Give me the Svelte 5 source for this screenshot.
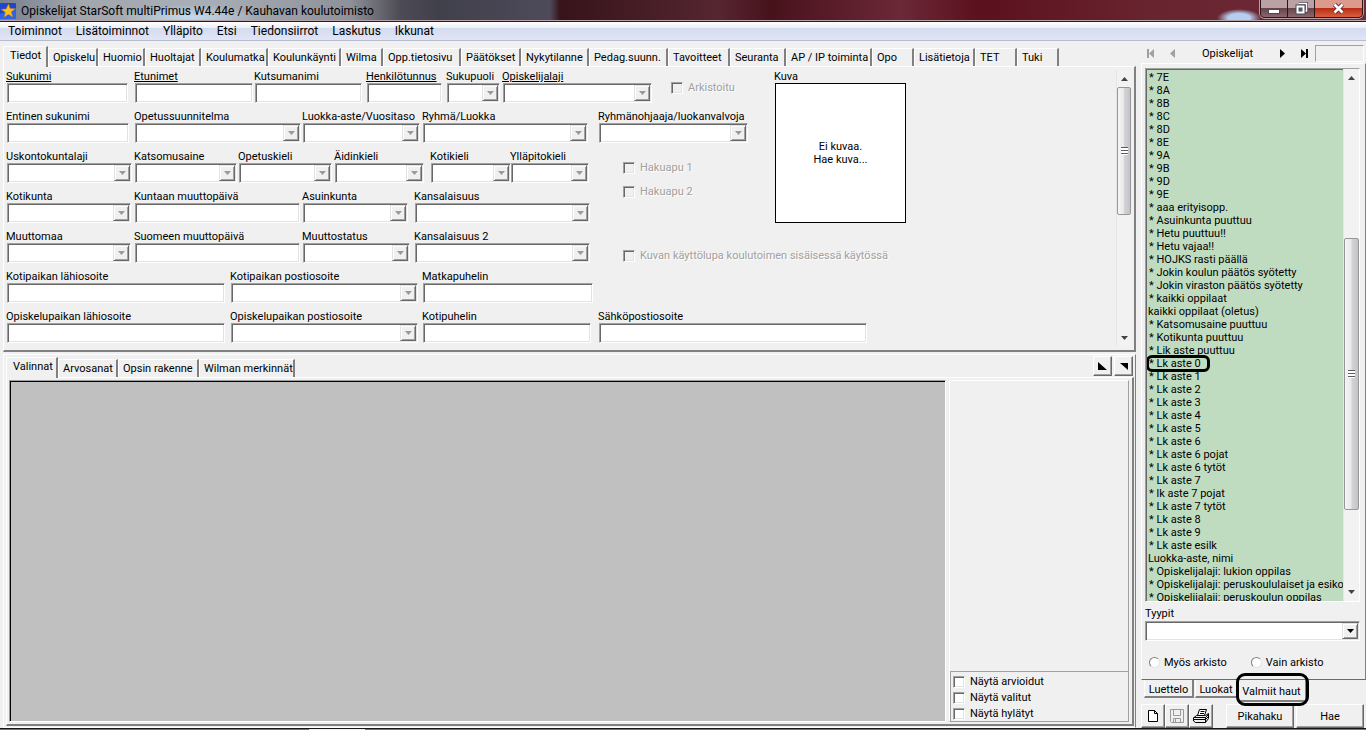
<script>
    const menus = ["Toiminnot", "Lisätoiminnot", "Ylläpito", "Etsi", "Tiedonsiirrot", "Laskutus", "Ikkunat"];

    // name + width of the tab
    const tabs = [
        ["Tiedot", 45], ["Opiskelu", 50], ["Huomio", 47], ["Huoltajat", 56], ["Koulumatka", 67],
        ["Koulunkäynti", 73], ["Wilma", 42], ["Opp.tietosivu", 78], ["Päätökset", 60], ["Nykytilanne", 68],
        ["Pedag.suunn.", 79], ["Tavoitteet", 62], ["Seuranta", 56], ["AP / IP toiminta", 86], ["Opo", 42],
        ["Lisätietoja", 61], ["TET", 42], ["Tuki", 42]
    ];
    const lowerTabs = [["Valinnat", 52], ["Arvosanat", 60], ["Opsin rakenne", 81], ["Wilman merkinnät", 96]];

    // label, kind, slot width, control width, underlined
    const row1 = [
        ["Sukunimi", "text", 128, 121, true],
        ["Etunimet", "text", 120, 118, true],
        ["Kutsumanimi", "text", 112, 107],
        ["Henkilötunnus", "text", 80, 75, true],
        ["Sukupuoli", "select", 56, 53],
        ["Opiskelijalaji", "select", 168, 149, true]
    ];
    const row2 = [
        ["Entinen sukunimi", "text", 128, 122],
        ["Opetussuunnitelma", "select", 168, 166],
        ["Luokka-aste/Vuositaso", "select", 120, 117],
        ["Ryhmä/Luokka", "select", 176, 165],
        ["Ryhmänohjaaja/luokanvalvoja", "select", 149, 149]
    ];
    const row3 = [
        ["Uskontokuntalaji", "select", 128, 125],
        ["Katsomusaine", "select", 104, 102],
        ["Opetuskieli", "select", 96, 93],
        ["Äidinkieli", "select", 96, 89],
        ["Kotikieli", "select", 80, 80],
        ["Ylläpitokieli", "select", 105, 78]
    ];
    const row4 = [
        ["Kotikunta", "select", 128, 124],
        ["Kuntaan muuttopäivä", "text", 168, 165],
        ["Asuinkunta", "select", 112, 105],
        ["Kansalaisuus", "select", 200, 175]
    ];
    const row5 = [
        ["Muuttomaa", "select", 128, 124],
        ["Suomeen muuttopäivä", "text", 168, 165],
        ["Muuttostatus", "select", 112, 107],
        ["Kansalaisuus 2", "select", 208, 175]
    ];
    const row6 = [
        ["Kotipaikan lähiosoite", "text", 224, 218],
        ["Kotipaikan postiosoite", "select", 192, 187],
        ["Matkapuhelin", "text", 176, 170]
    ];
    const row7 = [
        ["Opiskelupaikan lähiosoite", "text", 224, 218],
        ["Opiskelupaikan postiosoite", "select", 192, 187],
        ["Kotipuhelin", "text", 176, 168],
        ["Sähköpostiosoite", "text", 268, 268]
    ];

    const searches = [
        "* 7E", "* 8A", "* 8B", "* 8C", "* 8D", "* 8E", "* 9A", "* 9B", "* 9D", "* 9E",
        "* aaa erityisopp.", "* Asuinkunta puuttuu", "* Hetu puuttuu!!", "* Hetu vajaa!!",
        "* HOJKS rasti päällä", "* Jokin koulun päätös syötetty", "* Jokin viraston päätös syötetty",
        "* kaikki oppilaat", "kaikki oppilaat (oletus)", "* Katsomusaine puuttuu",
        "* Kotikunta puuttuu", "* Lik aste puuttuu", "* Lk aste 0", "* Lk aste 1", "* Lk aste 2",
        "* Lk aste 3", "* Lk aste 4", "* Lk aste 5", "* Lk aste 6", "* Lk aste 6 pojat",
        "* Lk aste 6 tytöt", "* Lk aste 7", "* lk aste 7 pojat", "* Lk aste 7 tytöt",
        "* Lk aste 8", "* Lk aste 9", "* Lk aste esilk", "Luokka-aste, nimi",
        "* Opiskelijalaji: lukion oppilas", "* Opiskelijalaji: peruskoululaiset ja esikou",
        "* Opiskelijalaji: peruskoulun oppilas"
    ];
    const marked = "* Lk aste 0";

    let activeTab = $state("Tiedot");
    let activeLower = $state("Valinnat");
    let archive = $state("");
</script>

{#snippet fields(row)}
    {#each row as [name, kind, slot, width, underlined]}
        <label class="field" style:width="{slot}px">
            <span class="caption" class:underlined>{name}</span>
            {#if kind === "select"}
                <span class="combo" style:width="{width}px">
                    <select disabled><option></option></select>
                    <span class="drop">
                        <svg width="7" height="4" viewBox="0 0 7 4"><path d="M0 0h7L3.500 4z" fill="#9a9a9a" /></svg>
                    </span>
                </span>
            {:else}
                <input type="text" class="sunken" style:width="{width}px" />
            {/if}
        </label>
    {/each}
{/snippet}

{#snippet check(name, disabled)}
    <label class="check" class:disabled>
        <input type="checkbox" {disabled} />
        <span>{name}</span>
    </label>
{/snippet}

{#snippet scrollbar(kind)}
    <div class="scrollbar {kind}">
        <svg class="cap" width="7" height="4" viewBox="0 0 7 4"><path d="M0 4h7L3.500 0z" fill="#444" /></svg>
        <div class="track">
            <div class="thumb"><i></i></div>
        </div>
        <svg class="cap" width="7" height="4" viewBox="0 0 7 4"><path d="M0 0h7L3.500 4z" fill="#444" /></svg>
    </div>
{/snippet}

<div class="window">
    <header class="titlebar">
        <svg class="logo" width="16" height="16" viewBox="0 0 16 16">
            <rect width="16" height="16" rx="1" fill="#1d46cf" />
            <path d="M0 11l16-6v11H0z" fill="#2c63ea" />
            <path d="M8.500 1l1.600 4.600 5 .2-3.900 3.200 1.700 5-4.500-2.700-4.300 3 1.300-5L1 6.400l5.200-.5z" fill="#fdbf1c" stroke="#c77c0a" stroke-width=".5" />
        </svg>
        <h1>Opiskelijat StarSoft multiPrimus W4.44e / Kauhavan koulutoimisto</h1>
        <div class="controls">
            <button class="min" aria-label="Pienennä">
                <svg width="12" height="12" viewBox="0 0 12 12"><rect x=".5" y="6.500" width="11" height="4" fill="#fff" stroke="#4a4a58" /></svg>
            </button>
            <button class="max" aria-label="Palauta">
                <svg width="13" height="13" viewBox="0 0 13 13">
                    <path d="M4 1.500h7.500V9H9" fill="none" stroke="#4a4a58" stroke-width="3" />
                    <path d="M4 1.500h7.500V9H9" fill="none" stroke="#fff" stroke-width="1.500" />
                    <rect x="2.500" y="4.500" width="6" height="6" fill="none" stroke="#4a4a58" stroke-width="4" />
                    <rect x="2.500" y="4.500" width="6" height="6" fill="#555566" stroke="#fff" stroke-width="2" />
                </svg>
            </button>
            <button class="close" aria-label="Sulje">
                <svg width="13" height="11" viewBox="0 0 13 11">
                    <path d="M2.500 1.500l8 8M10.500 1.500l-8 8" stroke="#5a3038" stroke-width="4.500" />
                    <path d="M2.500 1.500l8 8M10.500 1.500l-8 8" stroke="#fff" stroke-width="2.600" />
                </svg>
            </button>
        </div>
    </header>

    <nav class="menubar">
        {#each menus as menu}
            <button>{menu}</button>
        {/each}
    </nav>

    <div class="body">
        <main>
            <section class="student">
                <div class="tabs">
                    {#each tabs as [name, width]}
                        <button class="tab" class:active={activeTab === name} style:width="{width}px" onclick={() => (activeTab = name)}>{name}</button>
                    {/each}
                </div>
                <div class="sheet">
                    <form>
                        <div class="upper">
                            <div>
                                <div class="row">
                                    {@render fields(row1)}
                                    {@render check("Arkistoitu", true)}
                                </div>
                                <div class="row">{@render fields(row2)}</div>
                                <div class="pair">
                                    <div>
                                        <div class="row">{@render fields(row3)}</div>
                                        <div class="row">{@render fields(row4)}</div>
                                    </div>
                                    <div class="stack">
                                        {@render check("Hakuapu 1", true)}
                                        {@render check("Hakuapu 2", true)}
                                    </div>
                                </div>
                            </div>
                            <div class="photo">
                                <span class="caption">Kuva</span>
                                <button type="button">Ei kuvaa.<br />Hae kuva...</button>
                            </div>
                        </div>
                        <div class="row permit">
                            {@render fields(row5)}
                            {@render check("Kuvan käyttölupa koulutoimen sisäisessä käytössä", true)}
                        </div>
                        <div class="row">{@render fields(row6)}</div>
                        <div class="row">{@render fields(row7)}</div>
                    </form>
                    {@render scrollbar("form-scroll")}
                </div>
            </section>

            <section class="choices">
                <div class="tabs">
                    {#each lowerTabs as [name, width]}
                        <button class="tab" class:active={activeLower === name} style:width="{width}px" onclick={() => (activeLower = name)}>{name}</button>
                    {/each}
                    <div class="corner">
                        <button class="raised" aria-label="Suurenna">
                            <svg width="9" height="8" viewBox="0 0 9 8"><path d="M0 0v8h9z" /></svg>
                        </button>
                        <button class="raised" aria-label="Pienennä">
                            <svg width="8" height="7" viewBox="0 0 8 7"><path d="M0 0h8v7z" /></svg>
                        </button>
                    </div>
                </div>
                <div class="sheet">
                    <div class="canvas"></div>
                    <div class="side">
                        <div class="filters">
                            {@render check("Näytä arvioidut", false)}
                            {@render check("Näytä valitut", false)}
                            {@render check("Näytä hylätyt", false)}
                        </div>
                    </div>
                </div>
            </section>
        </main>

        <aside>
            <div class="browse">
                <button class="dim" aria-label="Ensimmäinen">
                    <svg width="8" height="9" viewBox="0 0 8 9"><path d="M0 0h2v9H0zM7 0v9L2 4.500z" /></svg>
                </button>
                <button class="dim" aria-label="Edellinen">
                    <svg width="8" height="9" viewBox="0 0 8 9"><path d="M6 0v9L1 4.500z" /></svg>
                </button>
                <span>Opiskelijat</span>
                <button aria-label="Seuraava">
                    <svg width="8" height="9" viewBox="0 0 8 9"><path d="M2 0v9l5-4.500z" /></svg>
                </button>
                <button aria-label="Viimeinen">
                    <svg width="8" height="9" viewBox="0 0 8 9"><path d="M1 0v9l5-4.500zM6 0h2v9H6z" /></svg>
                </button>
                <output></output>
            </div>

            <div class="finder">
                <div class="listbox">
                    <ul>
                        {#each searches as item}
                            <li class:star={item[0] === "*"}>
                                {item}
                                {#if item === marked}<span class="ring"></span>{/if}
                            </li>
                        {/each}
                    </ul>
                    {@render scrollbar("list-scroll")}
                </div>
                <label class="types">
                    <span class="caption">Tyypit</span>
                    <span class="combo">
                        <select><option></option></select>
                        <span class="drop">
                            <svg width="7" height="4" viewBox="0 0 7 4"><path d="M0 0h7L3.500 4z" /></svg>
                        </span>
                    </span>
                </label>
                <div class="radios">
                    <label><input type="radio" name="archive" value="also" bind:group={archive} /> Myös arkisto</label>
                    <label><input type="radio" name="archive" value="only" bind:group={archive} /> Vain arkisto</label>
                </div>
            </div>

            <div class="bottom-tabs">
                <button>Luettelo</button>
                <button>Luokat</button>
                <button class="active">Valmiit haut<span class="ring"></span></button>
            </div>

            <div class="actions">
                <button class="raised icon" aria-label="Uusi">
                    <svg width="12" height="14" viewBox="0 0 12 14"><path d="M1.500 1.500h6l3 3v8h-9zM7.500 1.500v3h3" fill="#fff" stroke="#000" /></svg>
                </button>
                <button class="raised icon" aria-label="Tallenna">
                    <svg width="14" height="14" viewBox="0 0 14 14">
                        <path d="M.5.5h13v13h-12l-1-1zM3.500.5v6h7v-6M3.500 13.500v-4h7v4M5.500 10v3" fill="none" stroke="#9a9a9a" />
                    </svg>
                </button>
                <button class="raised icon" aria-label="Tulosta">
                    <svg width="17" height="15" viewBox="0 0 17 15">
                        <path d="M3.500 6.500h9l3-2v5l-3 4h-10l-2-1.500v-3z" fill="#f0f0f0" stroke="#000" />
                        <path d="M6.500.5h7l-2 6h-7z" fill="#fff" stroke="#000" />
                        <path d="M7.500 2.500h4M7 4.500h4M.5 8.500h12l3-3M.5 10.500h12l3-3M12.500 8.500v5" fill="none" stroke="#000" />
                    </svg>
                </button>
                <button class="raised wide first">Pikahaku</button>
                <button class="raised wide">Hae</button>
            </div>
        </aside>
    </div>
    <footer><span></span></footer>
</div>

<style>
    :global(body) {
        background: #f0f0f0;
    }

    .window {
        height: 100vh;
        display: flex;
        flex-direction: column;
        overflow: hidden;
        background: #f0f0f0;
        color: #000;
        font: 11px/13px Roboto, Tahoma, sans-serif;
        white-space: nowrap;
    }
    .window *, .window *::after {
        box-sizing: border-box;
    }
    button, input, select {
        font: inherit;
        color: inherit;
        margin: 0;
        padding: 0;
        border: 0;
        border-radius: 0;
        background: none;
    }
    svg {
        display: block;
        flex: none;
    }

    /* title and menu */
    .titlebar {
        height: 22px;
        flex: none;
        display: flex;
        align-items: center;
        border-bottom: 1px solid #2a1a20;
        box-shadow: inset 0 -1px #b7a3a8;
        background:
            radial-gradient(ellipse 22px 9px at 1239px 18px, #b4cdf0 50%, transparent),
            radial-gradient(ellipse 70px 12px at 190px 17px, #c3dcf0, transparent),
            linear-gradient(90deg, #77808f 0, #a2a6ad 80px, #a9afb8 200px, #8e9199 350px, #4d4b55 400px, #40404b 440px, #4e4a5a 550px, #37131a 560px, #552630 720px, #48121b 770px, #6b2837 900px, #5b111d 980px, #68242f 1150px, #6d2a36 100%);
    }
    .logo {
        margin-right: 5px;
    }
    h1 {
        flex: 1;
        margin: 0;
        font: 12px/20px Roboto, "Segoe UI", sans-serif;
    }
    .controls {
        align-self: flex-start;
        display: flex;
        height: 18px;
        margin-right: 3px;
        border: 1px solid #2b161c;
        border-top: 0;
        border-radius: 0 0 5px 5px;
        overflow: hidden;
        box-shadow: 0 0 0 1px #b99ba1;
    }
    .controls button {
        width: 27px;
        display: flex;
        align-items: center;
        justify-content: center;
        border-right: 1px solid #2b161c;
        background: linear-gradient(#b9a1a6 0 45%, #654148 46%, #8b686f);
    }
    .controls .close {
        width: 47px;
        border-right: 0;
        background: linear-gradient(#dc9a8c 0 45%, #b72a14 46%, #d9603c);
    }
    .menubar {
        height: 19px;
        flex: none;
        display: flex;
        gap: 14px;
        padding-left: 8px;
        background: linear-gradient(#fff, #e9edf7 35%, #d4dbee 36%, #e0e6f6);
        border-bottom: 1px solid #b6bccc;
    }
    .menubar button {
        font: 12px/18px Roboto, "Segoe UI", sans-serif;
    }

    .body {
        flex: 1;
        min-height: 0;
        display: flex;
        gap: 5px;
    }
    main {
        flex: 1;
        min-width: 0;
        display: flex;
        flex-direction: column;
        gap: 2px;
        padding: 5px 0 0 3px;
    }

    /* tabs */
    .tabs {
        display: flex;
        align-items: flex-end;
        height: 20px;
    }
    .tab {
        height: 18px;
        flex: none;
        text-align: left;
        padding: 0 0 0 4px;
        border-top: 1px solid #fff;
        border-left: 1px solid #fff;
        border-right: 2px solid #808080;
    }
    .tab.active {
        padding: 0 0 3px 6px;
        position: relative;
        margin-bottom: -1px;
        height: 21px;
        background: #f0f0f0;
    }
    .sheet {
        display: flex;
        border: 1px solid #fff;
        border-right: 2px solid #808080;
        border-bottom: 2px solid #808080;
    }

    /* form */
    .student .sheet {
        justify-content: space-between;
        height: 286px;
        padding: 3px;
    }
    .upper, .row, .pair {
        display: flex;
    }
    .row {
        height: 40px;
    }
    .field {
        flex: none;
        display: flex;
        flex-direction: column;
    }
    .caption {
        display: block;
        height: 13px;
        margin-left: -1px;
    }
    .underlined {
        text-decoration: underline;
    }
    .sunken, .combo {
        height: 20px;
        background: #fff;
        border: 1px solid;
        border-color: #a0a0a0 #fff #fff #a0a0a0;
        box-shadow: inset 1px 1px #696969, inset -1px -1px #e3e3e3;
    }
    .combo {
        display: flex;
        position: relative;
        padding: 1px;
    }
    .combo select {
        flex: 1;
        width: 100%;
        appearance: none;
        opacity: 1;
    }
    .drop {
        position: absolute;
        top: 1px;
        right: 1px;
        bottom: 1px;
        width: 16px;
        display: flex;
        align-items: center;
        justify-content: center;
        pointer-events: none;
        background: #f0f0f0;
        border: 1px solid;
        border-color: #e3e3e3 #696969 #696969 #e3e3e3;
        box-shadow: inset 1px 1px #fff, inset -1px -1px #a0a0a0;
    }
    .check {
        display: flex;
        align-items: center;
        gap: 5px;
        height: 13px;
    }
    .check input {
        appearance: none;
        width: 12px;
        height: 12px;
        background: #fff;
        border: 1px solid;
        border-color: #a0a0a0 #fff #fff #a0a0a0;
        box-shadow: inset 1px 1px #696969, inset -1px -1px #e3e3e3;
    }
    .check.disabled {
        color: #a0a0a0;
        text-shadow: 1px 1px #fff;
    }
    .check.disabled input {
        background: #f0f0f0;
    }
    .row .check {
        flex: none;
        margin-top: 11px;
    }
    .permit .check {
        margin-top: 19px;
    }
    .stack {
        display: flex;
        flex-direction: column;
        gap: 11px;
        padding: 11px 0 0 7px;
    }
    .upper > div:first-child {
        width: 768px;
    }
    .photo button {
        display: block;
        width: 131px;
        height: 140px;
        background: #fff;
        border: 1px solid #000;
    }

    /* scrollbars */
    .scrollbar {
        width: 15px;
        flex: none;
        display: flex;
        flex-direction: column;
        align-items: center;
        background: #f2f2f2;
        border-left: 1px solid #e6e6e6;
        padding: 7px 0;
    }
    .track {
        flex: 1;
        width: 100%;
        padding: 6px 0;
        display: flex;
        flex-direction: column;
    }
    .thumb {
        display: flex;
        align-items: center;
        justify-content: center;
        height: 128px;
        border: 1px solid #979797;
        border-radius: 2px;
        background: linear-gradient(90deg, #f5f5f5, #e9e9eb 45%, #d2d2d6 55%, #c4c4c8);
    }
    .thumb i {
        width: 7px;
        height: 8px;
        background: repeating-linear-gradient(#5a5a5a 0 1px, #fff 1px 3px);
    }
    .list-scroll .track {
        padding-top: 158px;
    }
    .list-scroll .thumb {
        height: 272px;
    }

    /* lower panel */
    .choices {
        flex: 1;
        min-height: 0;
        display: flex;
        flex-direction: column;
        padding: 2px 1px 1px 2px;
        border: 1px solid #fff;
        border-right-color: #808080;
    }
    .choices .sheet {
        flex: 1;
        min-height: 0;
        padding: 2px;
        gap: 3px;
    }
    .corner {
        display: flex;
        gap: 2px;
        margin-left: auto;
        padding: 0 1px 1px 0;
    }
    .raised {
        display: flex;
        align-items: center;
        justify-content: center;
        background: #f0f0f0;
        border: 1px solid;
        border-color: #fff #696969 #696969 #fff;
        box-shadow: inset -1px -1px #a0a0a0;
    }
    .corner .raised {
        width: 19px;
        height: 20px;
    }
    .canvas {
        flex: 1;
        background: #c0c0c0;
        border: 1px solid;
        border-color: #a0a0a0 #fff #fff #a0a0a0;
        box-shadow: inset 1px 1px #000;
    }
    .side {
        width: 180px;
        flex: none;
        display: flex;
        flex-direction: column;
        justify-content: flex-end;
        border: 1px solid;
        border-color: #fff #a0a0a0 #a0a0a0 #fff;
        margin-right: 1px;
    }
    .filters {
        display: flex;
        flex-direction: column;
        gap: 3px;
        padding: 3px 2px 1px;
        border-top: 1px solid #a0a0a0;
        border-left: 1px solid #a0a0a0;
    }

    /* search column */
    aside {
        width: 225px;
        flex: none;
        display: flex;
        flex-direction: column;
    }
    .browse {
        display: flex;
        align-items: center;
        height: 22px;
        gap: 14px;
        padding: 3px 2px 1px 6px;
    }
    .browse button {
        width: 8px;
    }
    .browse .dim {
        fill: #a0a0a0;
    }
    .browse span {
        flex: 1;
        text-align: center;
    }
    .browse output {
        width: 49px;
        height: 17px;
        margin-left: -7px;
        border: 1px solid;
        border-color: #a0a0a0 #fff #fff #a0a0a0;
    }
    .finder {
        flex: 1;
        min-height: 0;
        display: flex;
        flex-direction: column;
        padding: 4px 5px 10px 3px;
        border: 1px solid;
        border-color: #fff #808080 #696969 #fff;
    }
    .listbox {
        flex: 1;
        min-height: 0;
        display: flex;
        border: 1px solid;
        border-color: #a0a0a0 #fff #fff #a0a0a0;
        box-shadow: inset 1px 1px #696969;
        background: #c0dcc0;
        overflow: hidden;
    }
    .listbox ul {
        flex: 1;
        min-width: 0;
        margin: 1px 0 0 1px;
        padding: 1px 0 0 1px;
        list-style: none;
        overflow: hidden;
    }
    li {
        position: relative;
        height: 13px;
    }
    .star {
        padding-left: 1px;
    }
    .ring {
        position: absolute;
        border: 3px solid #000;
        border-radius: 6px;
        pointer-events: none;
    }
    li .ring {
        top: -2px;
        left: -2px;
        width: 64px;
        height: 17px;
    }
    .list-scroll {
        width: 16px;
    }
    .types {
        margin-top: 5px;
    }
    .types .caption {
        height: 14px;
        margin-left: 0;
    }
    .types .combo {
        width: 100%;
    }
    .radios {
        display: flex;
        gap: 24px;
        padding: 15px 0 0 4px;
    }
    .radios label {
        display: flex;
        align-items: center;
        gap: 4px;
    }
    .radios input {
        appearance: none;
        width: 11px;
        height: 11px;
        border-radius: 50%;
        background: #fff;
        border: 1px solid;
        border-color: #808080 #e3e3e3 #e3e3e3 #808080;
    }
    .bottom-tabs {
        display: flex;
        align-items: flex-start;
        height: 24px;
        padding-left: 3px;
        gap: 1px;
    }
    .bottom-tabs button {
        height: 18px;
        width: 50px;
        padding-top: 2px;
        border-left: 1px solid #fff;
        border-right: 2px solid #808080;
        border-bottom: 2px solid #808080;
    }
    .bottom-tabs button:nth-child(2) {
        width: 41px;
        border-right: 0;
    }
    .bottom-tabs .active {
        position: relative;
        width: 70px;
        height: 22px;
        background: #f0f0f0;
    }
    .bottom-tabs .ring {
        top: -7px;
        left: -2px;
        width: 73px;
        height: 33px;
        border-radius: 9px;
    }
    .actions {
        display: flex;
        height: 24px;
    }
    .icon {
        width: 24px;
    }
    .wide {
        flex: 1;
        margin-right: 2px;
    }
    .first {
        margin-left: 13px;
    }
    footer {
        height: 2px;
        flex: none;
        display: flex;
        background: #77707a;
        border-top: 1px solid #17131a;
        padding-left: 309px;
    }
    footer span {
        width: 56px;
        background: #f0f0f0;
    }
</style>
